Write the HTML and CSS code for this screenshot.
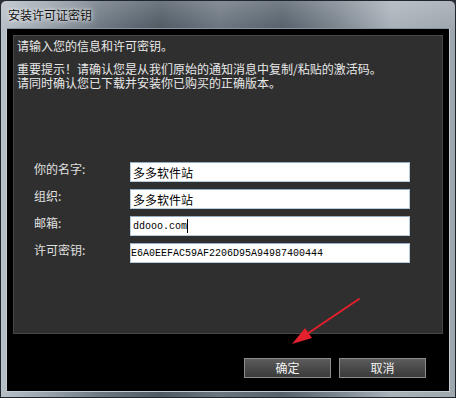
FILE: index.html
```html
<!DOCTYPE html>
<html lang="zh-CN">
<head>
<meta charset="utf-8">
<title>安装许可证密钥</title>
<link rel="stylesheet" href="styles.css">
</head>
<body>
<div class="window">
  <div class="titlebar">安装许可证密钥</div>
  <div class="client">
    <div class="panel">
      <p class="intro">请输入您的信息和许可密钥。</p>
      <p class="note">重要提示！请确认您是从我们原始的通知消息中复制/粘贴的激活码。<br>请同时确认您已下载并安装你已购买的正确版本。</p>
      <div class="form">
        <div class="label">你的名字:</div>
        <div class="field cjk">多多软件站</div>
        <div class="label">组织:</div>
        <div class="field cjk">多多软件站</div>
        <div class="label">邮箱:</div>
        <div class="field mono">ddooo.com<span class="caret"></span></div>
        <div class="label">许可密钥:</div>
        <div class="field mono key">E6A0EEFAC59AF2206D95A94987400444</div>
      </div>
    </div>
    <div class="buttons">
      <div class="btn">确定</div>
      <div class="btn">取消</div>
    </div>
  </div>
  <svg class="arrow" width="456" height="398" viewBox="0 0 456 398">
    <line x1="359" y1="299" x2="304" y2="336" stroke="#e3202b" stroke-width="2" stroke-linecap="round"/>
    <polygon points="292,344 312,338 305,328" fill="#e3202b"/>
  </svg>
</div>
</body>
</html>
```

FILE: styles.css
```css
html, body {
  margin: 0;
  padding: 0;
}
body {
  width: 456px;
  height: 398px;
  overflow: hidden;
  background: #2a2e33;
  font-family: "Noto Sans CJK SC", "Noto Sans", sans-serif;
  font-size: 12px;
}
.window {
  position: relative;
  box-sizing: border-box;
  width: 456px;
  height: 398px;
  border: 1px solid #1f262d;
  border-radius: 6px 6px 0 0;
  padding: 0 5px 5px 5px;
  display: flex;
  flex-direction: column;
  background:
    linear-gradient(to bottom, rgba(255,255,255,0.18) 0px, rgba(255,255,255,0) 28px),
    linear-gradient(to right, #b7bfc7 0%, #9aa3ac 10%, #6c7781 22%, #4f5a64 35%, #6b757f 48%, #56616b 62%, #7b858e 74%, #a9b1b9 86%, #9ea6ae 100%);
}
.titlebar {
  height: 27px;
  line-height: 27px;
  padding-left: 2px;
  color: #101010;
  font-size: 12px;
  text-shadow: 0 0 6px rgba(255,255,255,0.9), 0 0 3px rgba(255,255,255,0.8);
}
.client {
  flex: 1;
  display: flex;
  flex-direction: column;
  background: #000;
  border: 1px solid #c3ccd4;
  border-top-color: #8a949d;
}
.panel {
  box-sizing: border-box;
  height: 299px;
  margin: 6px 6px 0 6px;
  background: #2f2f2f;
  border: 1px solid #474747;
  padding: 3px 3px;
  color: #e8e8e8;
}
.panel p {
  margin: 0;
  line-height: 14px;
}
.intro {
  margin-bottom: 9px !important;
}
.form {
  margin: 72px 0 0 17px;
  display: grid;
  grid-template-columns: 96px 280px;
  row-gap: 7px;
  align-items: start;
}
.label {
  line-height: 14px;
  color: #e0e0e0;
}
.field {
  box-sizing: border-box;
  height: 20px;
  background: #fff;
  border: 1px solid #b7cde0;
  border-top-color: #93aec6;
  color: #000;
  padding-left: 2px;
  display: flex;
  align-items: center;
  white-space: nowrap;
}
.cjk {
  font-size: 12px;
}
.mono {
  font-family: "Liberation Mono", monospace;
  font-size: 10px;
  padding-left: 2px;
}
.key {
  padding-left: 0;
}
.caret {
  display: inline-block;
  width: 1px;
  height: 14px;
  background: #000;
  margin-left: 0;
}
.buttons {
  display: flex;
  justify-content: flex-end;
  gap: 8px;
  margin-top: 24px;
  padding-right: 23px;
}
.btn {
  box-sizing: border-box;
  width: 87px;
  height: 20px;
  line-height: 18px;
  text-align: center;
  color: #f2f2f2;
  border: 1px solid #8c8c8c;
  background: linear-gradient(to bottom, #5c5c5c 0%, #4a4a4a 50%, #3a3a3a 100%);
}
.arrow {
  position: absolute;
  left: -1px;
  top: -1px;
  pointer-events: none;
}
```
